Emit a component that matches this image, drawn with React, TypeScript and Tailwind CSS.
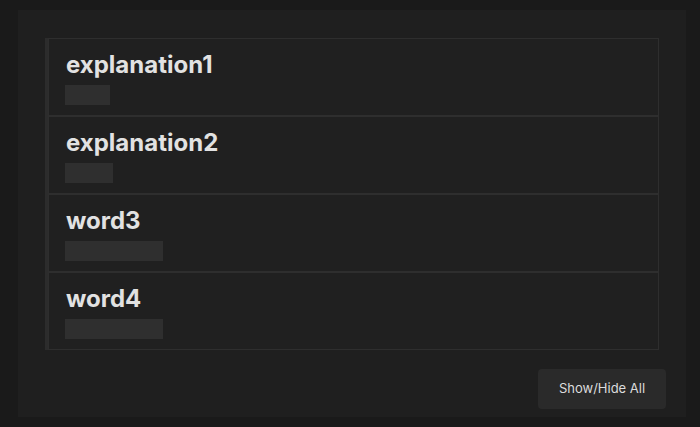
const items = [
  { title: 'explanation1', w: 45 },
  { title: 'explanation2', w: 48 },
  { title: 'word3', w: 98 },
  { title: 'word4', w: 98 },
]

export default function App() {
  return (
    <div className="min-h-[427px] w-full bg-[#1a1a1a] pt-[10px] pl-[18px] pr-[14px] pb-[10px] font-['Inter',sans-serif]">
      <div className="bg-[#1f1f1f] h-[407px] w-[668px] pt-[28px] pl-[27px] pr-[27px]">
        <div className="border-l-[3px] border-[#2c2c2c] flex flex-col">
          {items.map(item => (
            <div
              key={item.title}
              className="border border-[#2e2e2e] bg-[#202020] h-[78px] pl-[16px] pt-[11px]"
            >
              <div className="text-[24px] leading-[30px] font-bold text-[#e2e2e2] pl-px">{item.title}</div>
              <div className="mt-[5px] h-[20px] bg-[#2f2f2f]" style={{ width: item.w }} />
            </div>
          ))}
        </div>
        <div className="flex justify-end mt-[19px]">
          <button className="w-[128px] h-[40px] rounded bg-[#2a2a2a] text-[13px] text-[#dcdcdc] mr-[-7px]">
            Show/Hide All
          </button>
        </div>
      </div>
    </div>
  )
}
